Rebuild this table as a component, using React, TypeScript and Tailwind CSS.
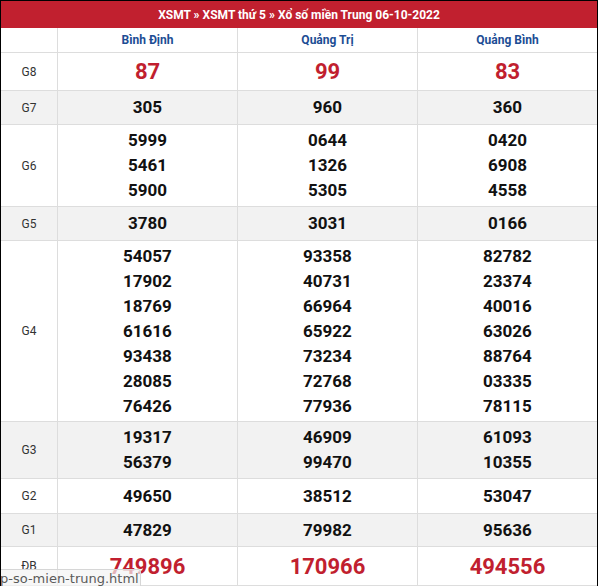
import React from "react";

type Row = {
  label: string;
  values: string[][];
  h: string;
  gray?: boolean;
  big?: boolean;
};

const rows: Row[] = [
  { label: "G8", values: [["87"], ["99"], ["83"]], h: "h-[37px]", big: true },
  { label: "G7", values: [["305"], ["960"], ["360"]], h: "h-[33px]", gray: true },
  {
    label: "G6",
    values: [
      ["5999", "5461", "5900"],
      ["0644", "1326", "5305"],
      ["0420", "6908", "4558"],
    ],
    h: "h-[81px]",
  },
  { label: "G5", values: [["3780"], ["3031"], ["0166"]], h: "h-[33px]", gray: true },
  {
    label: "G4",
    values: [
      ["54057", "17902", "18769", "61616", "93438", "28085", "76426"],
      ["93358", "40731", "66964", "65922", "73234", "72768", "77936"],
      ["82782", "23374", "40016", "63026", "88764", "03335", "78115"],
    ],
    h: "h-[180px]",
  },
  {
    label: "G3",
    values: [
      ["19317", "56379"],
      ["46909", "99470"],
      ["61093", "10355"],
    ],
    h: "h-[56px]",
    gray: true,
  },
  { label: "G2", values: [["49650"], ["38512"], ["53047"]], h: "h-[34px]" },
  { label: "G1", values: [["47829"], ["79982"], ["95636"]], h: "h-[32px]", gray: true },
  { label: "ĐB", values: [["749896"], ["170966"], ["494556"]], h: "h-[38px]", big: true },
];

const provinces = ["Bình Định", "Quảng Trị", "Quảng Bình"];

function Cell({ nums, big }: { nums: string[]; big?: boolean }) {
  return (
    <div className="flex flex-col items-center justify-center">
      {nums.map((n) => (
        <div
          key={n}
          className={
            big
              ? "text-[22px] leading-[25px] font-bold text-[#c11f2f]"
              : "text-[17px] leading-[25px] font-bold text-[#111]"
          }
        >
          {n}
        </div>
      ))}
    </div>
  );
}

export default function App() {
  return (
    <div
      className="relative w-[598px] h-[586px] overflow-hidden bg-white border-t border-l border-r border-black"
      style={{ fontFamily: "Roboto, 'Liberation Sans', sans-serif" }}
    >
      {/* Title bar */}
      <div className="h-[27px] bg-[#c1202f] flex items-center justify-center text-white text-[12px] font-bold">
        XSMT » XSMT thứ 5 » Xổ số miền Trung 06-10-2022
      </div>

      {/* Province header */}
      <div className="flex h-[25px] border-b border-[#dddddd]">
        <div className="w-[57px] border-r border-[#dddddd]" />
        {provinces.map((p, i) => (
          <div
            key={p}
            className={`${i < 2 ? "w-[180px] border-r border-[#dddddd]" : "flex-1"} flex items-center justify-center text-[12px] font-bold text-[#1c4d94]`}
          >
            {p}
          </div>
        ))}
      </div>

      {rows.map((r) => (
        <div
          key={r.label}
          className={`flex ${r.h} border-b border-[#dddddd] ${r.gray ? "bg-[#f2f2f2]" : "bg-white"}`}
          style={{ boxSizing: "content-box" }}
        >
          <div className="w-[57px] border-r border-[#dddddd] flex items-center justify-center text-[12px] text-[#333]">
            {r.label}
          </div>
          {r.values.map((v, i) => (
            <div
              key={i}
              className={`${i < 2 ? "w-[180px] border-r border-[#dddddd]" : "flex-1"} flex items-center justify-center`}
            >
              <Cell nums={v} big={r.big} />
            </div>
          ))}
        </div>
      ))}

      {/* Browser status bar link preview */}
      <div className="absolute left-0 bottom-0 w-[140px] h-[17px] bg-[#f3f3f3]/70 border-t border-r border-[#d6d6d6] rounded-tr-[3px] flex items-center overflow-hidden">
        <span
          className="whitespace-nowrap text-[13px] leading-[17px] text-[#5a5a5a] -ml-[1px]"
          style={{ fontFamily: "'DejaVu Sans', sans-serif" }}
        >
          p-so-mien-trung.html
        </span>
      </div>
    </div>
  );
}
